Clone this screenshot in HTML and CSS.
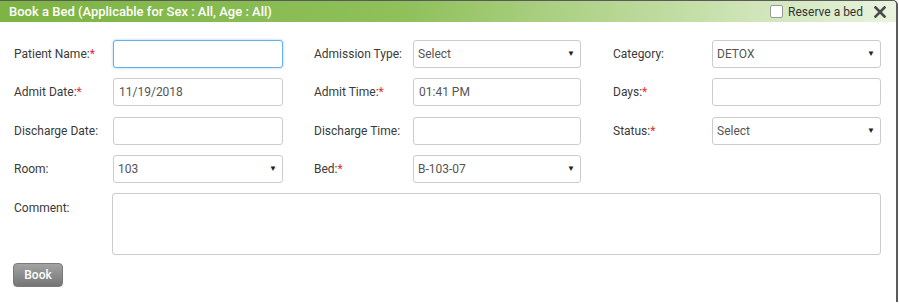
FILE: index.html
```html
<!DOCTYPE html>
<html lang="en">
<head>
    <meta charset="UTF-8">
    <meta name="viewport" content="width=device-width, initial-scale=1.0">
    <title>Book a Bed</title>
    <link rel="stylesheet" href="styles.css">
</head>
<body>
    <div class="dialog">
        <header class="dialogHeader">
            <h1>Book a Bed (Applicable for Sex : All, Age : All)</h1>
            <div class="headerTools">
                <label class="reserve"><input type="checkbox"> Reserve a bed</label>
                <button class="closeBtn" title="Close">
                    <svg width="12" height="12" viewBox="0 0 12 12">
                        <path d="M1.5 1.5 L10.5 10.5 M10.5 1.5 L1.5 10.5" stroke="#4a4a4a" stroke-width="2.6" stroke-linecap="square"/>
                    </svg>
                </button>
            </div>
        </header>

        <form class="bedForm" action="#">
            <div class="formRow">
                <div class="field">
                    <label>Patient Name:<span class="req">*</span></label>
                    <input type="text" class="focused">
                </div>
                <div class="field">
                    <label>Admission Type:</label>
                    <div class="selectBox"><select><option>Select</option></select><span class="arrow">&#9660;</span></div>
                </div>
                <div class="field">
                    <label>Category:</label>
                    <div class="selectBox"><select><option>DETOX</option></select><span class="arrow">&#9660;</span></div>
                </div>
            </div>

            <div class="formRow">
                <div class="field">
                    <label>Admit Date:<span class="req">*</span></label>
                    <input type="text" value="11/19/2018">
                </div>
                <div class="field">
                    <label>Admit Time:<span class="req">*</span></label>
                    <input type="text" value="01:41 PM">
                </div>
                <div class="field">
                    <label>Days:<span class="req">*</span></label>
                    <input type="text">
                </div>
            </div>

            <div class="formRow">
                <div class="field">
                    <label>Discharge Date:</label>
                    <input type="text">
                </div>
                <div class="field">
                    <label>Discharge Time:</label>
                    <input type="text">
                </div>
                <div class="field">
                    <label>Status:<span class="req">*</span></label>
                    <div class="selectBox"><select><option>Select</option></select><span class="arrow">&#9660;</span></div>
                </div>
            </div>

            <div class="formRow">
                <div class="field">
                    <label>Room:</label>
                    <div class="selectBox"><select><option>103</option></select><span class="arrow">&#9660;</span></div>
                </div>
                <div class="field">
                    <label>Bed:<span class="req">*</span></label>
                    <div class="selectBox"><select><option>B-103-07</option></select><span class="arrow">&#9660;</span></div>
                </div>
            </div>

            <div class="commentRow">
                <label>Comment:</label>
                <textarea></textarea>
            </div>

            <button type="button" class="bookBtn">Book</button>
        </form>
    </div>
</body>
</html>
```

FILE: styles.css
```css
* {
    box-sizing: border-box;
}
body {
    margin: 0;
    background-color: #fff;
    font-family: Roboto, "Liberation Sans", sans-serif;
    font-size: 12px;
    color: #3a3a3a;
}

.dialog {
    width: 898px;
    height: 302px;
    border-top: 1px solid #5a5a5a;
    border-right: 2px solid #5a5a5a;
    border-top-right-radius: 5px;
    background-color: #fff;
}

.dialogHeader {
    display: flex;
    justify-content: space-between;
    align-items: center;
    height: 21px;
    padding-left: 9px;
    padding-right: 10px;
    background: linear-gradient(to right, #7db443 0%, #8fc05a 45%, #c9e1ae 80%, #e9f3df 100%);
    border-top-right-radius: 4px;
}

.dialogHeader h1 {
    margin: 0;
    font-size: 13px;
    font-weight: 500;
    color: #fff;
}

.headerTools {
    display: flex;
    align-items: center;
}

.reserve {
    display: flex;
    align-items: center;
    color: #333;
    font-size: 12px;
}

.reserve input {
    width: 13px;
    height: 13px;
    margin: 0 5px 0 0;
    appearance: none;
    border: 1px solid #999;
    border-radius: 2px;
    background-color: #fff;
}

.closeBtn {
    border: none;
    background: none;
    padding: 0;
    margin-left: 11px;
    display: flex;
}

.bedForm {
    padding: 18px 15px 0 14px;
}

.formRow {
    display: grid;
    grid-template-columns: 300px 299px 270px;
    height: 28px;
    margin-bottom: 10px;
}

.formRow:nth-child(2) {
    margin-bottom: 11px;
}

.field {
    display: flex;
    align-items: center;
}

.field label {
    width: 99px;
    flex-shrink: 0;
}

.req {
    color: #e0302f;
}

.field input,
.selectBox {
    width: 169px;
    height: 28px;
}

.field:first-child input,
.field:first-child .selectBox {
    width: 170px;
}

.field:nth-child(2) input,
.field:nth-child(2) .selectBox {
    width: 168px;
}

input, select, textarea {
    font-family: Roboto, "Liberation Sans", sans-serif;
    font-size: 12px;
    color: #555;
    border: 1px solid #ccc;
    border-radius: 3px;
    background-color: #fff;
    padding: 0 5px;
    outline: none;
}

.field input.focused {
    border-color: #66afe9;
    box-shadow: 0 0 3px rgba(102, 175, 233, 0.6);
}

.selectBox {
    position: relative;
}

.selectBox select {
    width: 100%;
    height: 100%;
    appearance: none;
    padding-left: 4px;
}

.selectBox .arrow {
    position: absolute;
    right: 6px;
    top: 9px;
    font-size: 8px;
    color: #222;
    pointer-events: none;
}

.commentRow {
    display: flex;
}

.commentRow label {
    width: 98px;
    padding-top: 8px;
}

.commentRow textarea {
    width: 770px;
    height: 62px;
    resize: none;
}

.bookBtn {
    margin-top: 8px;
    margin-left: -1px;
    width: 50px;
    height: 24px;
    border: 1px solid #7a7a7a;
    border-radius: 4px;
    background: linear-gradient(to bottom, #a3a3a3, #757575);
    color: #fff;
    font-family: Roboto, "Liberation Sans", sans-serif;
    font-size: 12px;
    font-weight: 500;
}
```
